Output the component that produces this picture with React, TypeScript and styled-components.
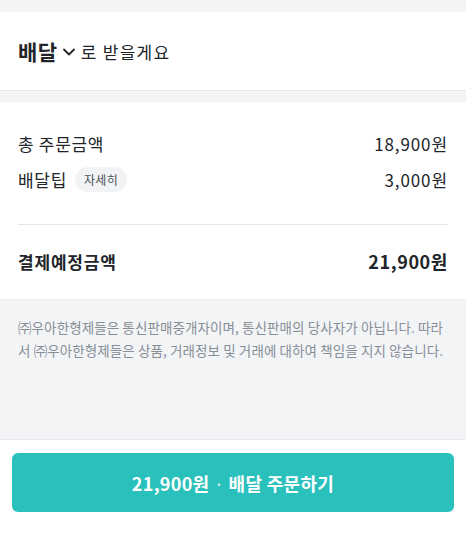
import styled, { createGlobalStyle } from "styled-components";

const GlobalStyle = createGlobalStyle`
  html, body {
    margin: 0;
    padding: 0;
    background: #ffffff;
  }
  body {
    font-family: "Noto Sans CJK KR", "Noto Sans", sans-serif;
    color: #212529;
  }
`;

const feeRows = [
  { label: "총 주문금액", value: "18,900원", detail: false },
  { label: "배달팁", value: "3,000원", detail: true },
];

const App = () => {
  return (
    <>
      <GlobalStyle />
      <Page>
        <Gap height={12} />
        <DeliverySection>
          <DeliveryType>배달</DeliveryType>
          <Chevron width="14" height="14" viewBox="0 0 14 14">
            <path
              d="M2 4.5 L7 9.5 L12 4.5"
              fill="none"
              stroke="#212529"
              strokeWidth="1.8"
              strokeLinecap="round"
              strokeLinejoin="round"
            />
          </Chevron>
          <DeliveryText>로 받을게요</DeliveryText>
        </DeliverySection>
        <Gap height={11} />
        <PriceSection>
          <PriceList>
            {feeRows.map((row) => (
              <PriceRow key={row.label}>
                <Label>
                  {row.label}
                  {row.detail && <DetailBadge>자세히</DetailBadge>}
                </Label>
                <Value>{row.value}</Value>
              </PriceRow>
            ))}
          </PriceList>
          <Divider />
          <TotalRow>
            <TotalLabel>결제예정금액</TotalLabel>
            <TotalValue>21,900원</TotalValue>
          </TotalRow>
        </PriceSection>
        <Notice>
          ㈜우아한형제들은 통신판매중개자이며, 통신판매의 당사자가 아닙니다. 따라서 ㈜우아한형제들은 상품, 거래정보 및 거래에 대하여 책임을 지지 않습니다.
        </Notice>
        <Footer>
          <OrderButton>
            21,900원<Dot>·</Dot>배달 주문하기
          </OrderButton>
        </Footer>
      </Page>
    </>
  );
};

export default App;

const Page = styled.div`
  width: 466px;
  height: 536px;
  display: flex;
  flex-direction: column;
  overflow: hidden;
`;

const Gap = styled.div<{ height: number }>`
  height: ${(p) => p.height}px;
  background: #f3f4f6;
  flex-shrink: 0;
`;

const DeliverySection = styled.div`
  height: 78px;
  padding: 0 18px;
  display: flex;
  align-items: center;
  background: #fff;
  border-bottom: 1px solid #e6e8eb;
`;

const DeliveryType = styled.span`
  font-size: 21px;
  font-weight: 700;
  color: #212529;
  letter-spacing: 0.5px;
`;

const Chevron = styled.svg`
  margin: 2px 5px 0 4px;
`;

const DeliveryText = styled.span`
  font-size: 17px;
  color: #212529;
  letter-spacing: 1.3px;
`;

const PriceSection = styled.div`
  background: #fff;
  padding: 28px 18px 0;
  height: 198px;
  box-sizing: border-box;
  border-bottom: 1px solid #eceef0;
`;

const PriceList = styled.div`
  display: flex;
  flex-direction: column;
  gap: 10px;
`;

const PriceRow = styled.div`
  height: 26px;
  display: flex;
  align-items: center;
  justify-content: space-between;
`;

const Label = styled.div`
  display: flex;
  align-items: center;
  font-size: 17px;
  color: #212529;
  letter-spacing: 0.7px;
`;

const Value = styled.div`
  font-size: 17px;
  color: #212529;
  letter-spacing: 0.9px;
`;

const DetailBadge = styled.span`
  margin-left: 8px;
  height: 25px;
  padding: 0 9px;
  border-radius: 13px;
  background: #f1f3f5;
  font-size: 12px;
  color: #495057;
  letter-spacing: 0.3px;
  display: inline-flex;
  align-items: center;
`;

const Divider = styled.div`
  height: 1px;
  background: #e3e5e8;
  margin: 32px 0 0;
`;

const TotalRow = styled.div`
  margin-top: 23px;
  height: 26px;
  display: flex;
  align-items: center;
  justify-content: space-between;
`;

const TotalLabel = styled.div`
  font-size: 17px;
  font-weight: 700;
  color: #212529;
  letter-spacing: 0.8px;
`;

const TotalValue = styled.div`
  font-size: 18px;
  font-weight: 700;
  color: #212529;
  letter-spacing: 0.6px;
`;

const Notice = styled.div`
  background: #f3f4f6;
  height: 140px;
  box-sizing: border-box;
  padding: 16px 16px 0 18px;
  font-size: 13.5px;
  line-height: 23px;
  color: #868e96;
  letter-spacing: 0.1px;
  border-bottom: 1px solid #e6e8eb;
`;

const Footer = styled.div`
  flex: 1;
  background: #fff;
  padding: 13px 12px 0;
`;

const OrderButton = styled.button`
  width: 100%;
  height: 59px;
  border: none;
  border-radius: 6px;
  background: #2ac1bc;
  color: #fff;
  font-family: "Noto Sans CJK KR", "Noto Sans", sans-serif;
  font-size: 18px;
  font-weight: 700;
  letter-spacing: 0.3px;
  cursor: pointer;
`;

const Dot = styled.span`
  font-family: "Noto Sans", sans-serif;
  font-weight: 400;
  margin: 0 7px;
  opacity: 0.85;
`;
